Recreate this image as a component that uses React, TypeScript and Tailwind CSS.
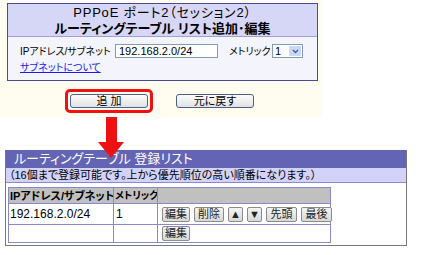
import React from "react";

const F = { fontFamily: '"Liberation Sans","Noto Sans CJK JP",sans-serif' };

function SmallBtn({ children, w }: { children: React.ReactNode; w: string }) {
  return (
    <div
      className={`${w} shrink-0 h-[15px] border border-[#8c8c8c] rounded-[2px] bg-gradient-to-b from-[#f4f4f4] to-[#d8d8d8] text-[11px] leading-[13px] text-[#222] flex items-center justify-center whitespace-nowrap`}
    >
      {children}
    </div>
  );
}

export default function App() {
  return (
    <div
      className="relative w-[433px] h-[255px] bg-white text-black overflow-hidden [font-feature-settings:'palt']"
      style={F}
    >
      {/* top cream section */}
      <div className="w-[322px] h-[117px] bg-[#fffdf0] pt-[3px] pl-[7px]">
        <div className="w-[311px] h-[78px] border border-[#4a4a9c] bg-[#f4f4fc]">
          <div className="h-[33px] bg-[#d6d6f6] border-b border-[#a0a0d6] flex flex-col items-center pt-[1px] leading-[16px] whitespace-nowrap">
            <div className="text-[13px] tracking-[0.8px]">PPPoE ポート2（セッション2）</div>
            <div className="text-[13px] font-bold">ルーティングテーブル リスト追加･編集</div>
          </div>
          <div className="pl-[12px] pt-[7px]">
            <div className="flex items-center h-[14px] whitespace-nowrap">
              <span className="w-[95px] shrink-0 text-[10px]">IPアドレス/サブネット</span>
              <div className="w-[103px] shrink-0 h-[14px] border border-[#7f9db9] bg-white text-[11px] leading-[12px] pl-[3px]">
                192.168.2.0/24
              </div>
              <span className="ml-[11px] w-[43px] shrink-0 text-[10px]">メトリック</span>
              <div className="w-[31px] shrink-0 h-[14px] border border-[#7f9db9] bg-white flex items-center justify-between pl-[2px] pr-[1px]">
                <span className="text-[11px] leading-[12px]">1</span>
                <div className="w-[12px] h-[10px] bg-[#c8d8f8] rounded-[1px] flex items-center justify-center">
                  <svg width="7" height="5" viewBox="0 0 7 5">
                    <path d="M1 1 L3.5 3.5 L6 1" stroke="#4d6185" strokeWidth="1.4" fill="none" />
                  </svg>
                </div>
              </div>
            </div>
            <div className="mt-[3px] text-[10px] leading-[14px] text-[#1a1aee] underline whitespace-nowrap">
              サブネットについて
            </div>
          </div>
        </div>
        <div className="flex items-center mt-[8px] pl-[58px]">
          <div className="w-[88px] h-[24px] border-[3px] border-[#ee1111] rounded-[5px] flex items-center justify-center">
            <div className="w-[78px] h-[14px] border border-[#4d6185] rounded-[3px] bg-gradient-to-b from-[#fcfcfc] to-[#e2e2e2] text-[11px] leading-[12px] flex items-center justify-center whitespace-nowrap">
              追 加
            </div>
          </div>
          <div className="ml-[23px] w-[78px] h-[14px] border border-[#4d6185] rounded-[3px] bg-gradient-to-b from-[#fcfcfc] to-[#e2e2e2] text-[11px] leading-[12px] flex items-center justify-center whitespace-nowrap">
            元に戻す
          </div>
        </div>
      </div>

      {/* bottom list section */}
      <div className="ml-[5px] mt-[33px] w-[402px] h-[96px] border-l border-r border-b border-[#777] bg-white">
        <div className="h-[18px] bg-[#6464b4] text-white text-[13px] leading-[18px] pl-[8px] whitespace-nowrap">
          ルーティングテーブル 登録リスト
        </div>
        <div className="h-[15px] bg-[#d2d2fa] border-b border-[#8a8ad0] text-[11px] leading-[14px] pl-[3px] whitespace-nowrap">
          （16個まで登録可能です。上から優先順位の高い順番になります。）
        </div>
        <div className="pl-[2px] pt-[4px]">
          <table className="w-[323px] table-fixed border-collapse border border-[#3a3aa0] text-[11px]">
            <colgroup>
              <col className="w-[105px]" />
              <col className="w-[44px]" />
              <col />
            </colgroup>
            <tbody>
              <tr className="h-[16px] bg-[#c0c0c0]">
                <td className="border border-[#8888cc] font-bold px-[1px] py-0 text-[11px] leading-[14px] whitespace-nowrap overflow-hidden">
                  IPアドレス/サブネット
                </td>
                <td className="border border-[#8888cc] font-bold px-[1px] py-0 text-[10px] leading-[14px] whitespace-nowrap overflow-hidden">
                  メトリック
                </td>
                <td className="border border-[#8888cc] p-0"></td>
              </tr>
              <tr className="h-[21px]">
                <td className="border border-[#8888cc] px-[1px] py-0 text-[12px] leading-[14px] whitespace-nowrap">192.168.2.0/24</td>
                <td className="border border-[#8888cc] px-[2px] py-0 text-[12px] leading-[14px]">1</td>
                <td className="border border-[#8888cc] pl-[4px] py-0">
                  <div className="flex items-center gap-[4px]">
                    <SmallBtn w="w-[28px]">編集</SmallBtn>
                    <SmallBtn w="w-[30px]">削除</SmallBtn>
                    <SmallBtn w="w-[15px]">▲</SmallBtn>
                    <SmallBtn w="w-[15px]">▼</SmallBtn>
                    <SmallBtn w="w-[31px]">先頭</SmallBtn>
                    <SmallBtn w="w-[31px]">最後</SmallBtn>
                  </div>
                </td>
              </tr>
              <tr className="h-[18px]">
                <td className="border border-[#8888cc] p-0"></td>
                <td className="border border-[#8888cc] p-0"></td>
                <td className="border border-[#8888cc] pl-[4px] py-0">
                  <SmallBtn w="w-[28px]">編集</SmallBtn>
                </td>
              </tr>
            </tbody>
          </table>
        </div>
      </div>

      {/* red arrow annotation */}
      <div className="absolute left-[106px] top-[117px] w-[11px] h-[26px] bg-[#ee1111]" />
      <svg className="absolute left-[98px] top-[142px]" width="26" height="16" viewBox="0 0 26 16">
        <polygon points="0,0 26,0 13,16" fill="#ee1111" />
      </svg>
    </div>
  );
}
